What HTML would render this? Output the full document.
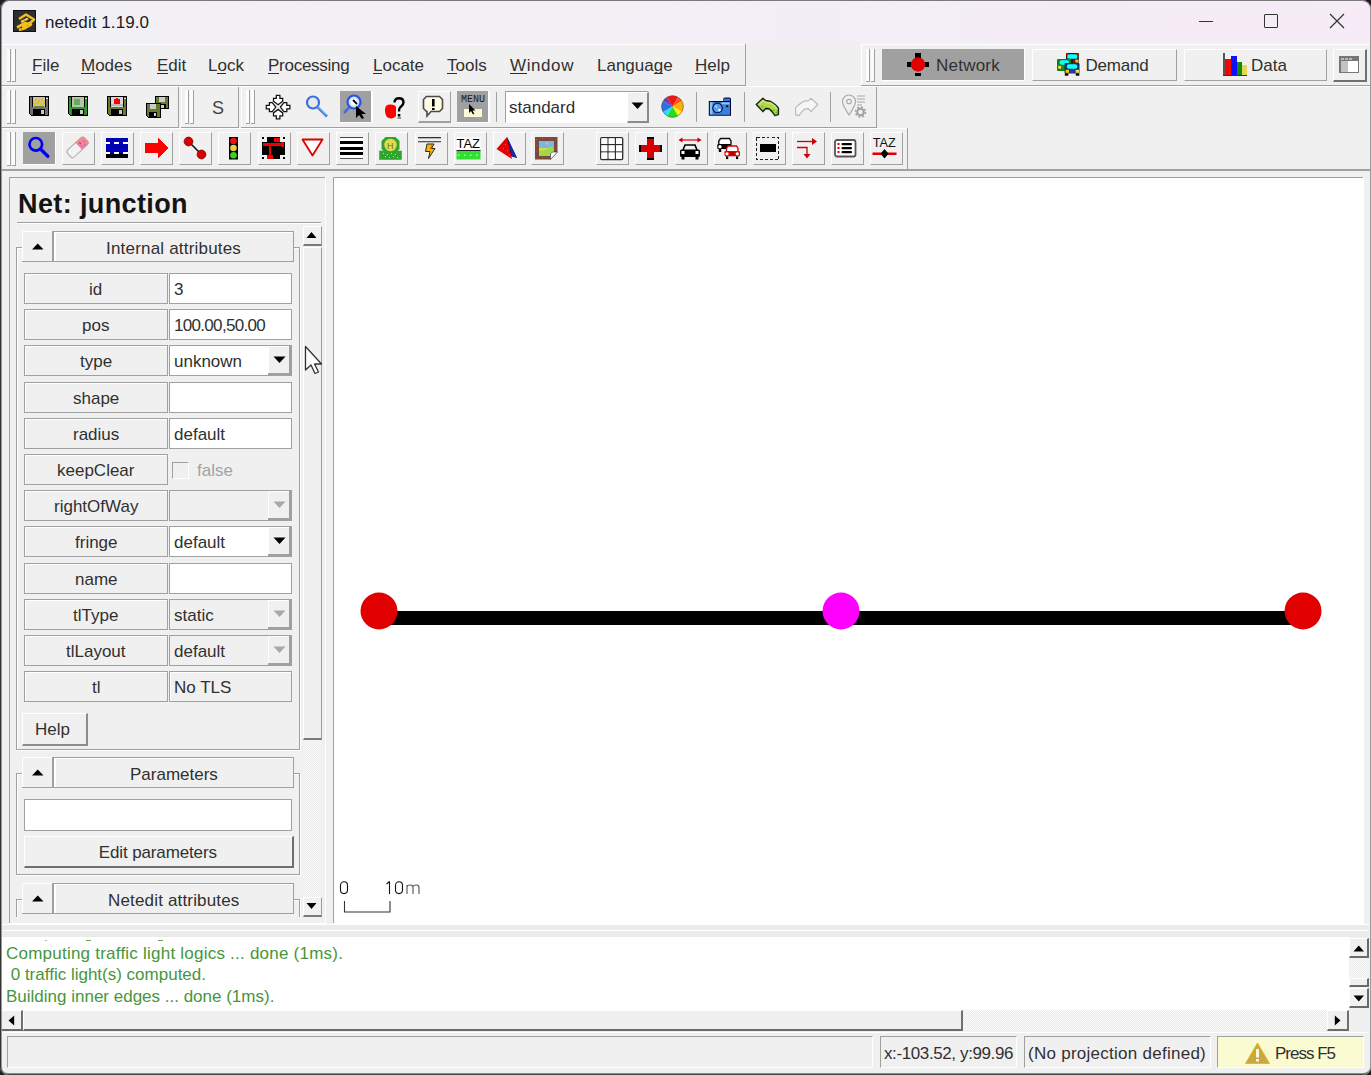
<!DOCTYPE html>
<html><head><meta charset="utf-8">
<style>
*{box-sizing:border-box;margin:0;padding:0}
body{width:1371px;height:1075px;overflow:hidden;background:#1e1e1e;font-family:"Liberation Sans",sans-serif;position:relative}
.a{position:absolute}
.t{white-space:nowrap}
</style></head><body>
<div class="a" style="left:0;top:0;width:1371px;height:1075px;background:#f0f0f0;border-radius:8px 8px 7px 7px;overflow:hidden;"><div class="a" style="left:2px;top:1px;width:1367px;height:43px;background:linear-gradient(90deg,#f1f0f4 0%,#f2eff5 45%,#f6ebf6 100%)"></div></div><div class="a" style="left:13px;top:10px;width:23px;height:22px;background:#2d2a22;"></div><div class="a t" style="left:45px;top:14.06px;font-size:17px;line-height:17px;color:#1b1b1b;letter-spacing:0.071px;">netedit 1.19.0</div><div class="a" style="left:1199px;top:21px;width:14px;height:1px;background:#333;"></div><div class="a" style="left:1264px;top:14px;width:14px;height:14px;border:1.2px solid #333;border-radius:1px"></div><svg class="a" style="left:1329px;top:13px" width="16" height="16" viewBox="0 0 16 16"><path d="M1 1L15 15M15 1L1 15" stroke="#333" stroke-width="1.2"/></svg><div class="a" style="left:2px;top:44px;width:744px;height:1px;background:#fff;"></div><div class="a" style="left:2px;top:85px;width:744px;height:1px;background:#a0a0a0;"></div><div class="a" style="left:745px;top:44px;width:1px;height:42px;background:#a0a0a0;"></div><div class="a" style="left:7px;top:49px;width:3px;height:33px;background:#fcfcfc;"></div><div class="a" style="left:10px;top:49px;width:1px;height:33px;background:#a0a0a0;"></div><div class="a" style="left:12px;top:49px;width:3px;height:33px;background:#fcfcfc;"></div><div class="a" style="left:15px;top:49px;width:1px;height:33px;background:#a0a0a0;"></div><div class="a" style="left:7px;top:81px;width:4px;height:1px;background:#a0a0a0;"></div><div class="a" style="left:12px;top:81px;width:4px;height:1px;background:#a0a0a0;"></div><div class="a t" style="left:32px;top:57.06px;font-size:17px;line-height:17px;color:#303030;">File</div><div class="a" style="left:32px;top:73px;width:10px;height:1px;background:#303030;"></div><div class="a t" style="left:81px;top:57.06px;font-size:17px;line-height:17px;color:#303030;">Modes</div><div class="a" style="left:81px;top:73px;width:14px;height:1px;background:#303030;"></div><div class="a t" style="left:157px;top:57.06px;font-size:17px;line-height:17px;color:#303030;">Edit</div><div class="a" style="left:157px;top:73px;width:11px;height:1px;background:#303030;"></div><div class="a t" style="left:208px;top:57.06px;font-size:17px;line-height:17px;color:#303030;">Lock</div><div class="a" style="left:217px;top:73px;width:9px;height:1px;background:#303030;"></div><div class="a t" style="left:268px;top:57.06px;font-size:17px;line-height:17px;color:#303030;letter-spacing:-0.259px;">Processing</div><div class="a" style="left:268px;top:73px;width:11px;height:1px;background:#303030;"></div><div class="a t" style="left:373px;top:57.06px;font-size:17px;line-height:17px;color:#303030;">Locate</div><div class="a" style="left:373px;top:73px;width:9px;height:1px;background:#303030;"></div><div class="a t" style="left:447px;top:57.06px;font-size:17px;line-height:17px;color:#303030;">Tools</div><div class="a" style="left:447px;top:73px;width:10px;height:1px;background:#303030;"></div><div class="a t" style="left:510px;top:57.06px;font-size:17px;line-height:17px;color:#303030;letter-spacing:0.589px;">Window</div><div class="a" style="left:510px;top:73px;width:17px;height:1px;background:#303030;"></div><div class="a t" style="left:597px;top:57.06px;font-size:17px;line-height:17px;color:#303030;">Language</div><div class="a" style="left:654px;top:73px;width:9px;height:1px;background:#303030;"></div><div class="a t" style="left:695px;top:57.06px;font-size:17px;line-height:17px;color:#303030;">Help</div><div class="a" style="left:695px;top:73px;width:12px;height:1px;background:#303030;"></div><div class="a" style="left:861px;top:44px;width:510px;height:1px;background:#fff;"></div><div class="a" style="left:861px;top:44px;width:1px;height:42px;background:#fff;"></div><div class="a" style="left:861px;top:85px;width:510px;height:1px;background:#a0a0a0;"></div><div class="a" style="left:866px;top:49px;width:3px;height:33px;background:#fcfcfc;"></div><div class="a" style="left:869px;top:49px;width:1px;height:33px;background:#a0a0a0;"></div><div class="a" style="left:871px;top:49px;width:3px;height:33px;background:#fcfcfc;"></div><div class="a" style="left:874px;top:49px;width:1px;height:33px;background:#a0a0a0;"></div><div class="a" style="left:866px;top:81px;width:4px;height:1px;background:#a0a0a0;"></div><div class="a" style="left:871px;top:81px;width:4px;height:1px;background:#a0a0a0;"></div><div class="a" style="left:882px;top:49px;width:143px;height:32px;background:#a0a0a0;"></div><div class="a" style="left:882px;top:80px;width:143px;height:1px;background:#fff;"></div><div class="a" style="left:1024px;top:49px;width:1px;height:32px;background:#fff;"></div><div class="a" style="left:1032px;top:49px;width:145px;height:32px;background:#f0f0f0;border-top:1px solid #fff;border-left:1px solid #fff;border-right:1px solid #a0a0a0;border-bottom:1px solid #a0a0a0;"></div><div class="a" style="left:1184px;top:49px;width:143px;height:32px;background:#f0f0f0;border-top:1px solid #fff;border-left:1px solid #fff;border-right:1px solid #a0a0a0;border-bottom:1px solid #a0a0a0;"></div><div class="a" style="left:1333px;top:49px;width:34px;height:33px;background:#f0f0f0;border-top:1px solid #fff;border-left:1px solid #fff;border-right:2px solid #707070;border-bottom:2px solid #707070"></div><div class="a t" style="left:936px;top:57.06px;font-size:17px;line-height:17px;color:#303030;letter-spacing:0.237px;">Network</div><div class="a t" style="left:1085.5px;top:57.06px;font-size:17px;line-height:17px;color:#303030;letter-spacing:-0.208px;">Demand</div><div class="a t" style="left:1251px;top:57.06px;font-size:17px;line-height:17px;color:#303030;">Data</div><div class="a" style="left:2px;top:86px;width:1369px;height:1px;background:#fff;"></div><div class="a" style="left:2px;top:127px;width:177px;height:1px;background:#a0a0a0;"></div><div class="a" style="left:181px;top:127px;width:58px;height:1px;background:#a0a0a0;"></div><div class="a" style="left:241px;top:127px;width:636px;height:1px;background:#a0a0a0;"></div><div class="a" style="left:178px;top:87px;width:1px;height:40px;background:#a0a0a0;"></div><div class="a" style="left:238px;top:87px;width:1px;height:40px;background:#a0a0a0;"></div><div class="a" style="left:876px;top:87px;width:1px;height:40px;background:#a0a0a0;"></div><div class="a" style="left:181px;top:87px;width:1px;height:40px;background:#fff;"></div><div class="a" style="left:241px;top:87px;width:1px;height:40px;background:#fff;"></div><div class="a" style="left:7px;top:90px;width:3px;height:34px;background:#fcfcfc;"></div><div class="a" style="left:10px;top:90px;width:1px;height:34px;background:#a0a0a0;"></div><div class="a" style="left:12px;top:90px;width:3px;height:34px;background:#fcfcfc;"></div><div class="a" style="left:15px;top:90px;width:1px;height:34px;background:#a0a0a0;"></div><div class="a" style="left:7px;top:123px;width:4px;height:1px;background:#a0a0a0;"></div><div class="a" style="left:12px;top:123px;width:4px;height:1px;background:#a0a0a0;"></div><div class="a" style="left:185px;top:90px;width:3px;height:34px;background:#fcfcfc;"></div><div class="a" style="left:188px;top:90px;width:1px;height:34px;background:#a0a0a0;"></div><div class="a" style="left:190px;top:90px;width:3px;height:34px;background:#fcfcfc;"></div><div class="a" style="left:193px;top:90px;width:1px;height:34px;background:#a0a0a0;"></div><div class="a" style="left:185px;top:123px;width:4px;height:1px;background:#a0a0a0;"></div><div class="a" style="left:190px;top:123px;width:4px;height:1px;background:#a0a0a0;"></div><div class="a" style="left:246px;top:90px;width:3px;height:34px;background:#fcfcfc;"></div><div class="a" style="left:249px;top:90px;width:1px;height:34px;background:#a0a0a0;"></div><div class="a" style="left:251px;top:90px;width:3px;height:34px;background:#fcfcfc;"></div><div class="a" style="left:254px;top:90px;width:1px;height:34px;background:#a0a0a0;"></div><div class="a" style="left:246px;top:123px;width:4px;height:1px;background:#a0a0a0;"></div><div class="a" style="left:251px;top:123px;width:4px;height:1px;background:#a0a0a0;"></div><div class="a t" style="left:212px;top:98.71px;font-size:18px;line-height:18px;color:#444;">S</div><div class="a" style="left:340px;top:91px;width:31px;height:31px;background:#a0a0a0;"></div><div class="a" style="left:340px;top:122px;width:33px;height:1px;background:#fff;"></div><div class="a" style="left:371px;top:91px;width:2px;height:32px;background:#fff;"></div><div class="a" style="left:418px;top:91px;width:33px;height:32px;background:#f0f0f0;border-top:1px solid #fff;border-left:1px solid #fff;border-right:1px solid #a0a0a0;border-bottom:2px solid #a0a0a0"></div><div class="a" style="left:457px;top:91px;width:31px;height:31px;background:#a0a0a0;"></div><div class="a" style="left:457px;top:122px;width:33px;height:1px;background:#fff;"></div><div class="a" style="left:488px;top:91px;width:2px;height:32px;background:#fff;"></div><div class="a" style="left:496px;top:92px;width:1px;height:30px;background:#a0a0a0;"></div><div class="a" style="left:696px;top:92px;width:1px;height:30px;background:#a0a0a0;"></div><div class="a" style="left:744px;top:92px;width:1px;height:30px;background:#a0a0a0;"></div><div class="a" style="left:830px;top:92px;width:1px;height:30px;background:#a0a0a0;"></div><div class="a" style="left:505px;top:91px;width:144px;height:32px;background:#fff;border-top:1px solid #a0a0a0;border-left:1px solid #a0a0a0;border-right:1px solid #fff;border-bottom:1px solid #fff;"></div><div class="a" style="left:627px;top:92px;width:22px;height:31px;background:#f0f0f0;border-top:1px solid #fff;border-left:1px solid #fff;border-right:2px solid #8a8a8a;border-bottom:2px solid #8a8a8a"></div><svg class="a" style="left:631px;top:102px" width="14" height="10" viewBox="0 0 14 10"><path d="M0.5 0.5H12.5L6.5 7Z" fill="#000"/></svg><div class="a t" style="left:509px;top:99.06px;font-size:17px;line-height:17px;color:#303030;">standard</div><div class="a" style="left:2px;top:128px;width:906px;height:1px;background:#fff;"></div><div class="a" style="left:2px;top:169px;width:1369px;height:2px;background:#a0a0a0;"></div><div class="a" style="left:907px;top:128px;width:1px;height:41px;background:#a0a0a0;"></div><div class="a" style="left:7px;top:132px;width:3px;height:34px;background:#fcfcfc;"></div><div class="a" style="left:10px;top:132px;width:1px;height:34px;background:#a0a0a0;"></div><div class="a" style="left:12px;top:132px;width:3px;height:34px;background:#fcfcfc;"></div><div class="a" style="left:15px;top:132px;width:1px;height:34px;background:#a0a0a0;"></div><div class="a" style="left:7px;top:165px;width:4px;height:1px;background:#a0a0a0;"></div><div class="a" style="left:12px;top:165px;width:4px;height:1px;background:#a0a0a0;"></div><div class="a" style="left:23px;top:132px;width:33px;height:33px;background:#a0a0a0;"></div><div class="a" style="left:23px;top:164px;width:33px;height:1px;background:#fff;"></div><div class="a" style="left:55px;top:132px;width:1px;height:33px;background:#fff;"></div><div class="a" style="left:62px;top:132px;width:33px;height:33px;background:#f0f0f0;border-top:1px solid #fff;border-left:1px solid #fff;border-right:1px solid #a0a0a0;border-bottom:1px solid #a0a0a0;"></div><div class="a" style="left:101px;top:132px;width:33px;height:33px;background:#f0f0f0;border-top:1px solid #fff;border-left:1px solid #fff;border-right:1px solid #a0a0a0;border-bottom:1px solid #a0a0a0;"></div><div class="a" style="left:140px;top:132px;width:33px;height:33px;background:#f0f0f0;border-top:1px solid #fff;border-left:1px solid #fff;border-right:1px solid #a0a0a0;border-bottom:1px solid #a0a0a0;"></div><div class="a" style="left:179px;top:132px;width:33px;height:33px;background:#f0f0f0;border-top:1px solid #fff;border-left:1px solid #fff;border-right:1px solid #a0a0a0;border-bottom:1px solid #a0a0a0;"></div><div class="a" style="left:218px;top:132px;width:33px;height:33px;background:#f0f0f0;border-top:1px solid #fff;border-left:1px solid #fff;border-right:1px solid #a0a0a0;border-bottom:1px solid #a0a0a0;"></div><div class="a" style="left:258px;top:132px;width:33px;height:33px;background:#f0f0f0;border-top:1px solid #fff;border-left:1px solid #fff;border-right:1px solid #a0a0a0;border-bottom:1px solid #a0a0a0;"></div><div class="a" style="left:297px;top:132px;width:33px;height:33px;background:#f0f0f0;border-top:1px solid #fff;border-left:1px solid #fff;border-right:1px solid #a0a0a0;border-bottom:1px solid #a0a0a0;"></div><div class="a" style="left:336px;top:132px;width:33px;height:33px;background:#f0f0f0;border-top:1px solid #fff;border-left:1px solid #fff;border-right:1px solid #a0a0a0;border-bottom:1px solid #a0a0a0;"></div><div class="a" style="left:375px;top:132px;width:33px;height:33px;background:#f0f0f0;border-top:1px solid #fff;border-left:1px solid #fff;border-right:1px solid #a0a0a0;border-bottom:1px solid #a0a0a0;"></div><div class="a" style="left:415px;top:132px;width:33px;height:33px;background:#f0f0f0;border-top:1px solid #fff;border-left:1px solid #fff;border-right:1px solid #a0a0a0;border-bottom:1px solid #a0a0a0;"></div><div class="a" style="left:454px;top:132px;width:33px;height:33px;background:#f0f0f0;border-top:1px solid #fff;border-left:1px solid #fff;border-right:1px solid #a0a0a0;border-bottom:1px solid #a0a0a0;"></div><div class="a" style="left:493px;top:132px;width:33px;height:33px;background:#f0f0f0;border-top:1px solid #fff;border-left:1px solid #fff;border-right:1px solid #a0a0a0;border-bottom:1px solid #a0a0a0;"></div><div class="a" style="left:531px;top:132px;width:33px;height:33px;background:#f0f0f0;border-top:1px solid #fff;border-left:1px solid #fff;border-right:1px solid #a0a0a0;border-bottom:1px solid #a0a0a0;"></div><div class="a" style="left:596px;top:132px;width:33px;height:33px;background:#f0f0f0;border-top:1px solid #fff;border-left:1px solid #fff;border-right:1px solid #a0a0a0;border-bottom:1px solid #a0a0a0;"></div><div class="a" style="left:635px;top:132px;width:33px;height:33px;background:#f0f0f0;border-top:1px solid #fff;border-left:1px solid #fff;border-right:1px solid #a0a0a0;border-bottom:1px solid #a0a0a0;"></div><div class="a" style="left:675px;top:132px;width:33px;height:33px;background:#f0f0f0;border-top:1px solid #fff;border-left:1px solid #fff;border-right:1px solid #a0a0a0;border-bottom:1px solid #a0a0a0;"></div><div class="a" style="left:714px;top:132px;width:33px;height:33px;background:#f0f0f0;border-top:1px solid #fff;border-left:1px solid #fff;border-right:1px solid #a0a0a0;border-bottom:1px solid #a0a0a0;"></div><div class="a" style="left:753px;top:132px;width:33px;height:33px;background:#f0f0f0;border-top:1px solid #fff;border-left:1px solid #fff;border-right:1px solid #a0a0a0;border-bottom:1px solid #a0a0a0;"></div><div class="a" style="left:792px;top:132px;width:33px;height:33px;background:#f0f0f0;border-top:1px solid #fff;border-left:1px solid #fff;border-right:1px solid #a0a0a0;border-bottom:1px solid #a0a0a0;"></div><div class="a" style="left:831px;top:132px;width:33px;height:33px;background:#f0f0f0;border-top:1px solid #fff;border-left:1px solid #fff;border-right:1px solid #a0a0a0;border-bottom:1px solid #a0a0a0;"></div><div class="a" style="left:870px;top:132px;width:33px;height:33px;background:#f0f0f0;border-top:1px solid #fff;border-left:1px solid #fff;border-right:1px solid #a0a0a0;border-bottom:1px solid #a0a0a0;"></div><div class="a" style="left:9px;top:177px;width:317px;height:748px;background:#f0f0f0;border-top:1px solid #a0a0a0;border-left:1px solid #a0a0a0;border-right:1px solid #fff;border-bottom:1px solid #fff;"></div><div class="a" style="left:9px;top:177px;width:317px;height:1px;background:#a0a0a0;"></div><div class="a" style="left:9px;top:177px;width:1px;height:747px;background:#a0a0a0;"></div><div class="a" style="left:9px;top:923px;width:317px;height:1px;background:#fff;"></div><div class="a" style="left:325px;top:177px;width:1px;height:747px;background:#fff;"></div><div class="a t" style="left:18px;top:190.59px;font-size:27px;line-height:27px;color:#141414;font-weight:bold;letter-spacing:0.386px;">Net: junction</div><div class="a" style="left:17px;top:222px;width:304px;height:1px;background:#a0a0a0;"></div><div class="a" style="left:17px;top:223px;width:304px;height:1px;background:#fff;"></div><div class="a" style="left:16px;top:247px;width:284px;height:1px;background:#a0a0a0;"></div><div class="a" style="left:17px;top:248px;width:282px;height:1px;background:#fff;"></div><div class="a" style="left:16px;top:247px;width:1px;height:502px;background:#a0a0a0;"></div><div class="a" style="left:17px;top:248px;width:1px;height:501px;background:#fff;"></div><div class="a" style="left:299px;top:247px;width:1px;height:502px;background:#a0a0a0;"></div><div class="a" style="left:300px;top:247px;width:1px;height:503px;background:#fff;"></div><div class="a" style="left:16px;top:749px;width:284px;height:1px;background:#a0a0a0;"></div><div class="a" style="left:16px;top:750px;width:285px;height:1px;background:#fff;"></div><div class="a" style="left:22px;top:231px;width:31px;height:31px;background:#f0f0f0;"></div><div class="a" style="left:22px;top:231px;width:31px;height:1px;background:#fff;"></div><div class="a" style="left:22px;top:231px;width:1px;height:31px;background:#fff;"></div><div class="a" style="left:22px;top:261px;width:32px;height:1px;background:#a0a0a0;"></div><div class="a" style="left:52px;top:231px;width:2px;height:31px;background:#a0a0a0;"></div><svg class="a" style="left:32px;top:243px" width="12" height="7" viewBox="0 0 12 7"><path d="M0 6.5H11.5L5.75 0.5Z" fill="#000"/></svg><div class="a" style="left:54px;top:231px;width:240px;height:31px;background:#f0f0f0;"></div><div class="a" style="left:54px;top:231px;width:240px;height:1px;background:#a0a0a0;"></div><div class="a" style="left:55px;top:232px;width:238px;height:1px;background:#fff;"></div><div class="a" style="left:54px;top:232px;width:2px;height:29px;background:#fff;"></div><div class="a" style="left:293px;top:231px;width:1px;height:31px;background:#a0a0a0;"></div><div class="a" style="left:54px;top:261px;width:240px;height:1px;background:#a0a0a0;"></div><div class="a t" style="left:106px;top:239.56px;font-size:17px;line-height:17px;color:#303030;letter-spacing:0.194px;">Internal attributes</div><div class="a" style="left:24px;top:273px;width:144px;height:31px;background:#f0f0f0;border:1px solid #a0a0a0;box-shadow:inset 1px 1px 0 #fff"></div><div class="a t" style="left:89px;top:281.06px;font-size:17px;line-height:17px;color:#303030;">id</div><div class="a" style="left:169px;top:273px;width:123px;height:31px;background:#fff;border:1px solid #a0a0a0"></div><div class="a t" style="left:174px;top:281.06px;font-size:17px;line-height:17px;color:#303030;">3</div><div class="a" style="left:24px;top:309px;width:144px;height:31px;background:#f0f0f0;border:1px solid #a0a0a0;box-shadow:inset 1px 1px 0 #fff"></div><div class="a t" style="left:82px;top:317.06px;font-size:17px;line-height:17px;color:#303030;">pos</div><div class="a" style="left:169px;top:309px;width:123px;height:31px;background:#fff;border:1px solid #a0a0a0"></div><div class="a t" style="left:174px;top:317.06px;font-size:17px;line-height:17px;color:#303030;letter-spacing:-0.686px;">100.00,50.00</div><div class="a" style="left:24px;top:345px;width:144px;height:31px;background:#f0f0f0;border:1px solid #a0a0a0;box-shadow:inset 1px 1px 0 #fff"></div><div class="a t" style="left:80px;top:353.06px;font-size:17px;line-height:17px;color:#303030;">type</div><div class="a" style="left:169px;top:345px;width:123px;height:31px;background:#fff;border:1px solid #a0a0a0"></div><div class="a" style="left:268px;top:346px;width:23px;height:29px;background:#f0f0f0;border-right:2px solid #a0a0a0;border-bottom:2px solid #a0a0a0;box-shadow:inset 1px 1px 0 #fff"></div><svg class="a" style="left:273px;top:356px" width="13" height="8" viewBox="0 0 13 8"><path d="M0.5 0.5H12.5L6.5 7Z" fill="#000"/></svg><div class="a t" style="left:174px;top:353.06px;font-size:17px;line-height:17px;color:#303030;">unknown</div><div class="a" style="left:24px;top:382px;width:144px;height:31px;background:#f0f0f0;border:1px solid #a0a0a0;box-shadow:inset 1px 1px 0 #fff"></div><div class="a t" style="left:73px;top:390.06px;font-size:17px;line-height:17px;color:#303030;">shape</div><div class="a" style="left:169px;top:382px;width:123px;height:31px;background:#fff;border:1px solid #a0a0a0"></div><div class="a" style="left:24px;top:418px;width:144px;height:31px;background:#f0f0f0;border:1px solid #a0a0a0;box-shadow:inset 1px 1px 0 #fff"></div><div class="a t" style="left:73px;top:426.06px;font-size:17px;line-height:17px;color:#303030;">radius</div><div class="a" style="left:169px;top:418px;width:123px;height:31px;background:#fff;border:1px solid #a0a0a0"></div><div class="a t" style="left:174px;top:426.06px;font-size:17px;line-height:17px;color:#303030;">default</div><div class="a" style="left:24px;top:454px;width:144px;height:31px;background:#f0f0f0;border:1px solid #a0a0a0;box-shadow:inset 1px 1px 0 #fff"></div><div class="a t" style="left:57px;top:462.06px;font-size:17px;line-height:17px;color:#303030;">keepClear</div><div class="a" style="left:172px;top:462px;width:17px;height:17px;background:#f0f0f0;border-top:1px solid #a0a0a0;border-left:1px solid #a0a0a0;border-bottom:1px solid #fff;border-right:1px solid #fff"></div><div class="a t" style="left:197px;top:462.06px;font-size:17px;line-height:17px;color:#a3a3a3;">false</div><div class="a" style="left:24px;top:490px;width:144px;height:31px;background:#f0f0f0;border:1px solid #a0a0a0;box-shadow:inset 1px 1px 0 #fff"></div><div class="a t" style="left:54px;top:498.06px;font-size:17px;line-height:17px;color:#303030;">rightOfWay</div><div class="a" style="left:169px;top:490px;width:123px;height:31px;background:#f0f0f0;border:1px solid #a0a0a0"></div><div class="a" style="left:268px;top:491px;width:23px;height:29px;background:#f0f0f0;border-right:2px solid #a0a0a0;border-bottom:2px solid #a0a0a0;box-shadow:inset 1px 1px 0 #fff"></div><svg class="a" style="left:273px;top:501px" width="13" height="8" viewBox="0 0 13 8"><path d="M0.5 0.5H12.5L6.5 7Z" fill="#a8a8a8"/></svg><div class="a" style="left:24px;top:526px;width:144px;height:31px;background:#f0f0f0;border:1px solid #a0a0a0;box-shadow:inset 1px 1px 0 #fff"></div><div class="a t" style="left:75px;top:534.06px;font-size:17px;line-height:17px;color:#303030;">fringe</div><div class="a" style="left:169px;top:526px;width:123px;height:31px;background:#fff;border:1px solid #a0a0a0"></div><div class="a" style="left:268px;top:527px;width:23px;height:29px;background:#f0f0f0;border-right:2px solid #a0a0a0;border-bottom:2px solid #a0a0a0;box-shadow:inset 1px 1px 0 #fff"></div><svg class="a" style="left:273px;top:537px" width="13" height="8" viewBox="0 0 13 8"><path d="M0.5 0.5H12.5L6.5 7Z" fill="#000"/></svg><div class="a t" style="left:174px;top:534.06px;font-size:17px;line-height:17px;color:#303030;">default</div><div class="a" style="left:24px;top:563px;width:144px;height:31px;background:#f0f0f0;border:1px solid #a0a0a0;box-shadow:inset 1px 1px 0 #fff"></div><div class="a t" style="left:75px;top:571.06px;font-size:17px;line-height:17px;color:#303030;">name</div><div class="a" style="left:169px;top:563px;width:123px;height:31px;background:#fff;border:1px solid #a0a0a0"></div><div class="a" style="left:24px;top:599px;width:144px;height:31px;background:#f0f0f0;border:1px solid #a0a0a0;box-shadow:inset 1px 1px 0 #fff"></div><div class="a t" style="left:73px;top:607.06px;font-size:17px;line-height:17px;color:#303030;">tlType</div><div class="a" style="left:169px;top:599px;width:123px;height:31px;background:#f0f0f0;border:1px solid #a0a0a0"></div><div class="a" style="left:268px;top:600px;width:23px;height:29px;background:#f0f0f0;border-right:2px solid #a0a0a0;border-bottom:2px solid #a0a0a0;box-shadow:inset 1px 1px 0 #fff"></div><svg class="a" style="left:273px;top:610px" width="13" height="8" viewBox="0 0 13 8"><path d="M0.5 0.5H12.5L6.5 7Z" fill="#a8a8a8"/></svg><div class="a t" style="left:174px;top:607.06px;font-size:17px;line-height:17px;color:#303030;">static</div><div class="a" style="left:24px;top:635px;width:144px;height:31px;background:#f0f0f0;border:1px solid #a0a0a0;box-shadow:inset 1px 1px 0 #fff"></div><div class="a t" style="left:66px;top:643.06px;font-size:17px;line-height:17px;color:#303030;">tlLayout</div><div class="a" style="left:169px;top:635px;width:123px;height:31px;background:#f0f0f0;border:1px solid #a0a0a0"></div><div class="a" style="left:268px;top:636px;width:23px;height:29px;background:#f0f0f0;border-right:2px solid #a0a0a0;border-bottom:2px solid #a0a0a0;box-shadow:inset 1px 1px 0 #fff"></div><svg class="a" style="left:273px;top:646px" width="13" height="8" viewBox="0 0 13 8"><path d="M0.5 0.5H12.5L6.5 7Z" fill="#a8a8a8"/></svg><div class="a t" style="left:174px;top:643.06px;font-size:17px;line-height:17px;color:#303030;">default</div><div class="a" style="left:24px;top:671px;width:144px;height:31px;background:#f0f0f0;border:1px solid #a0a0a0;box-shadow:inset 1px 1px 0 #fff"></div><div class="a t" style="left:92px;top:679.06px;font-size:17px;line-height:17px;color:#303030;">tl</div><div class="a" style="left:169px;top:671px;width:123px;height:31px;background:#f0f0f0;border:1px solid #a0a0a0;box-shadow:inset 1px 1px 0 #fff"></div><div class="a t" style="left:174px;top:679.06px;font-size:17px;line-height:17px;color:#303030;">No TLS</div><div class="a" style="left:22px;top:713px;width:66px;height:33px;background:#f0f0f0;border-top:1px solid #fff;border-left:1px solid #fff;border-right:2px solid #8c8c8c;border-bottom:2px solid #8c8c8c"></div><div class="a t" style="left:35px;top:721.06px;font-size:17px;line-height:17px;color:#303030;">Help</div><div class="a" style="left:16px;top:773px;width:284px;height:1px;background:#a0a0a0;"></div><div class="a" style="left:17px;top:774px;width:282px;height:1px;background:#fff;"></div><div class="a" style="left:16px;top:773px;width:1px;height:101px;background:#a0a0a0;"></div><div class="a" style="left:17px;top:774px;width:1px;height:100px;background:#fff;"></div><div class="a" style="left:299px;top:773px;width:1px;height:101px;background:#a0a0a0;"></div><div class="a" style="left:300px;top:773px;width:1px;height:102px;background:#fff;"></div><div class="a" style="left:16px;top:874px;width:284px;height:1px;background:#a0a0a0;"></div><div class="a" style="left:16px;top:875px;width:285px;height:1px;background:#fff;"></div><div class="a" style="left:22px;top:757px;width:31px;height:31px;background:#f0f0f0;"></div><div class="a" style="left:22px;top:757px;width:31px;height:1px;background:#fff;"></div><div class="a" style="left:22px;top:757px;width:1px;height:31px;background:#fff;"></div><div class="a" style="left:22px;top:787px;width:32px;height:1px;background:#a0a0a0;"></div><div class="a" style="left:52px;top:757px;width:2px;height:31px;background:#a0a0a0;"></div><svg class="a" style="left:32px;top:769px" width="12" height="7" viewBox="0 0 12 7"><path d="M0 6.5H11.5L5.75 0.5Z" fill="#000"/></svg><div class="a" style="left:54px;top:757px;width:240px;height:31px;background:#f0f0f0;"></div><div class="a" style="left:54px;top:757px;width:240px;height:1px;background:#a0a0a0;"></div><div class="a" style="left:55px;top:758px;width:238px;height:1px;background:#fff;"></div><div class="a" style="left:54px;top:758px;width:2px;height:29px;background:#fff;"></div><div class="a" style="left:293px;top:757px;width:1px;height:31px;background:#a0a0a0;"></div><div class="a" style="left:54px;top:787px;width:240px;height:1px;background:#a0a0a0;"></div><div class="a t" style="left:130px;top:765.56px;font-size:17px;line-height:17px;color:#303030;">Parameters</div><div class="a" style="left:24px;top:799px;width:268px;height:32px;background:#fff;border:1px solid #a0a0a0"></div><div class="a" style="left:24px;top:836px;width:270px;height:32px;background:#f0f0f0;border-top:1px solid #fff;border-left:1px solid #fff;border-right:2px solid #6e6e6e;border-bottom:2px solid #6e6e6e"></div><div class="a t" style="left:98.8px;top:844.06px;font-size:17px;line-height:17px;color:#303030;letter-spacing:-0.131px;">Edit parameters</div><div class="a" style="left:16px;top:899px;width:284px;height:1px;background:#a0a0a0;"></div><div class="a" style="left:17px;top:900px;width:282px;height:1px;background:#fff;"></div><div class="a" style="left:16px;top:899px;width:1px;height:18px;background:#a0a0a0;"></div><div class="a" style="left:17px;top:900px;width:1px;height:17px;background:#fff;"></div><div class="a" style="left:299px;top:899px;width:1px;height:18px;background:#a0a0a0;"></div><div class="a" style="left:300px;top:899px;width:1px;height:19px;background:#fff;"></div><div class="a" style="left:22px;top:883px;width:31px;height:31px;background:#f0f0f0;"></div><div class="a" style="left:22px;top:883px;width:31px;height:1px;background:#fff;"></div><div class="a" style="left:22px;top:883px;width:1px;height:31px;background:#fff;"></div><div class="a" style="left:22px;top:913px;width:32px;height:1px;background:#a0a0a0;"></div><div class="a" style="left:52px;top:883px;width:2px;height:31px;background:#a0a0a0;"></div><svg class="a" style="left:32px;top:895px" width="12" height="7" viewBox="0 0 12 7"><path d="M0 6.5H11.5L5.75 0.5Z" fill="#000"/></svg><div class="a" style="left:54px;top:883px;width:240px;height:31px;background:#f0f0f0;"></div><div class="a" style="left:54px;top:883px;width:240px;height:1px;background:#a0a0a0;"></div><div class="a" style="left:55px;top:884px;width:238px;height:1px;background:#fff;"></div><div class="a" style="left:54px;top:884px;width:2px;height:29px;background:#fff;"></div><div class="a" style="left:293px;top:883px;width:1px;height:31px;background:#a0a0a0;"></div><div class="a" style="left:54px;top:913px;width:240px;height:1px;background:#a0a0a0;"></div><div class="a t" style="left:108px;top:891.56px;font-size:17px;line-height:17px;color:#303030;letter-spacing:0.168px;">Netedit attributes</div><div class="a" style="left:10px;top:917px;width:315px;height:6px;background:#f0f0f0;"></div><div class="a" style="left:301px;top:226px;width:22px;height:691px;background:#f0f0f0;"></div><div class="a" style="left:303px;top:740px;width:19px;height:157px;background-image:repeating-conic-gradient(#ebebeb 0 25%,#fafafa 0 50%);background-size:2px 2px"></div><div class="a" style="left:303px;top:226px;width:19px;height:20px;background:#f0f0f0;border-top:1px solid #fff;border-left:1px solid #fff;border-right:1px solid #9a9a9a;border-bottom:2px solid #7a7a7a"></div><svg class="a" style="left:0px;top:0px" width="1371" height="1075" viewBox="0 0 1371 1075"><path d="M306.5 238.0H316.5L311.5 232.0Z" fill="#000"/></svg><div class="a" style="left:303px;top:247px;width:19px;height:493px;background:#f0f0f0;border-top:1px solid #fff;border-left:1px solid #fff;border-right:1px solid #9a9a9a;border-bottom:2px solid #7a7a7a"></div><div class="a" style="left:303px;top:897px;width:19px;height:20px;background:#f0f0f0;border-top:1px solid #fff;border-left:1px solid #fff;border-right:1px solid #9a9a9a;border-bottom:2px solid #7a7a7a"></div><svg class="a" style="left:0px;top:0px" width="1371" height="1075" viewBox="0 0 1371 1075"><path d="M306.5 903.0H316.5L311.5 909.0Z" fill="#000"/></svg><div class="a" style="left:333px;top:177px;width:1030px;height:746px;background:#fff;"></div><div class="a" style="left:333px;top:177px;width:1030px;height:1px;background:#a0a0a0;"></div><div class="a" style="left:333px;top:177px;width:1px;height:746px;background:#a0a0a0;"></div><div class="a" style="left:333px;top:923px;width:1031px;height:1px;background:#fff;"></div><div class="a" style="left:1363px;top:177px;width:1px;height:747px;background:#fff;"></div><div class="a" style="left:378px;top:611px;width:925px;height:14px;background:#000;"></div><svg class="a" style="left:355px;top:585px" width="1000" height="55" viewBox="0 0 1000 55">
<circle cx="24" cy="26" r="18.5" fill="#e00000"/>
<circle cx="486" cy="26" r="18.5" fill="#ff00ff"/>
<circle cx="948" cy="26" r="18.5" fill="#e00000"/>
</svg><svg class="a" style="left:336px;top:878px" width="90" height="38" viewBox="0 0 90 38"><g fill="none" stroke="#111" stroke-width="1.1"><rect x="4.5" y="3.8" width="7" height="11.8" rx="3.5"/><path d="M53.5 3.5V16M53.5 3.5L50.5 6"/><rect x="59.5" y="3.8" width="7" height="11.8" rx="3.5"/><path d="M71 16V7M71 9Q71 7 74.5 7Q77 7 77 9.5V16M77 9Q77 7 80.5 7Q83 7 83 9.5V16" stroke="#555"/><path d="M8.5 23V34H54V23" stroke="#333"/></g></svg><div class="a" style="left:2px;top:924px;width:1367px;height:1px;background:#fff;"></div><div class="a" style="left:2px;top:925px;width:1367px;height:6px;background:#ebebeb;"></div><div class="a" style="left:2px;top:930px;width:1367px;height:1px;background:#fff;"></div><div class="a" style="left:2px;top:931px;width:1367px;height:6px;background:#ebebeb;"></div><div class="a" style="left:2px;top:937px;width:1347px;height:73px;background:#fff;"></div><div class="a t" style="left:6px;top:944.66px;font-size:17px;line-height:17px;color:#46963c;letter-spacing:0.228px;">Computing traffic light logics ... done (1ms).</div><div class="a t" style="left:6px;top:966.41px;font-size:17px;line-height:17px;color:#46963c;">&nbsp;0 traffic light(s) computed.</div><div class="a t" style="left:6px;top:988.16px;font-size:17px;line-height:17px;color:#46963c;">Building inner edges ... done (1ms).</div><div class="a" style="left:1349px;top:937px;width:20px;height:74px;background:#f0f0f0;"></div><div class="a" style="left:1349px;top:958px;width:20px;height:30px;background-image:repeating-conic-gradient(#ebebeb 0 25%,#fafafa 0 50%);background-size:2px 2px"></div><div class="a" style="left:1349px;top:938px;width:20px;height:20px;background:#f0f0f0;border-top:1px solid #fff;border-left:1px solid #fff;border-right:2px solid #6a6a6a;border-bottom:2px solid #6a6a6a"></div><svg class="a" style="left:1353px;top:945px" width="12" height="7" viewBox="0 0 12 7"><path d="M0.5 6.5H11L5.75 0.5Z" fill="#000"/></svg><div class="a" style="left:1349px;top:978px;width:20px;height:9px;background:#f0f0f0;border-top:1px solid #fff;border-left:1px solid #fff;border-right:2px solid #6a6a6a;border-bottom:2px solid #6a6a6a"></div><div class="a" style="left:1349px;top:988px;width:20px;height:20px;background:#f0f0f0;border-top:1px solid #fff;border-left:1px solid #fff;border-right:2px solid #6a6a6a;border-bottom:2px solid #6a6a6a"></div><svg class="a" style="left:1353px;top:995px" width="12" height="7" viewBox="0 0 12 7"><path d="M0.5 0.5H11L5.75 6.5Z" fill="#000"/></svg><div class="a" style="left:2px;top:1010px;width:1347px;height:21px;background-image:repeating-conic-gradient(#ebebeb 0 25%,#fafafa 0 50%);background-size:2px 2px"></div><div class="a" style="left:1px;top:1010px;width:22px;height:21px;background:#f0f0f0;border-top:1px solid #fff;border-left:1px solid #fff;border-right:2px solid #707070;border-bottom:2px solid #6a6a6a"></div><svg class="a" style="left:8px;top:1015px" width="7" height="11" viewBox="0 0 7 11"><path d="M6.2 0.5V10.5L0.5 5.5Z" fill="#000"/></svg><div class="a" style="left:23px;top:1010px;width:940px;height:21px;background:#f0f0f0;border-top:1px solid #fff;border-left:1px solid #fff;border-right:2px solid #707070;border-bottom:2px solid #6a6a6a"></div><div class="a" style="left:1327px;top:1010px;width:22px;height:21px;background:#f0f0f0;border-top:1px solid #fff;border-left:1px solid #fff;border-right:2px solid #707070;border-bottom:2px solid #6a6a6a"></div><svg class="a" style="left:1334px;top:1015px" width="7" height="11" viewBox="0 0 7 11"><path d="M0.8 0.5V10.5L6.5 5.5Z" fill="#000"/></svg><div class="a" style="left:1349px;top:1010px;width:20px;height:21px;background:#f0f0f0;"></div><div class="a" style="left:2px;top:1032px;width:1367px;height:1px;background:#fff;"></div><div class="a" style="left:7px;top:1036px;width:866px;height:32px;background:#f0f0f0;border-top:1px solid #a0a0a0;border-left:1px solid #a0a0a0;border-right:1px solid #fff;border-bottom:1px solid #fff;"></div><div class="a" style="left:880px;top:1036px;width:137px;height:32px;background:#f0f0f0;border-top:1px solid #a0a0a0;border-left:1px solid #a0a0a0;border-right:1px solid #fff;border-bottom:1px solid #fff;"></div><div class="a" style="left:1024px;top:1036px;width:187px;height:32px;background:#f0f0f0;border-top:1px solid #a0a0a0;border-left:1px solid #a0a0a0;border-right:1px solid #fff;border-bottom:1px solid #fff;"></div><div class="a" style="left:1217px;top:1036px;width:147px;height:32px;background:#fbfbd2;border-top:1px solid #a0a0a0;border-left:1px solid #a0a0a0;border-right:1px solid #fff;border-bottom:1px solid #fff;"></div><div class="a t" style="left:884px;top:1045.06px;font-size:17px;line-height:17px;color:#303030;letter-spacing:-0.391px;">x:-103.52, y:99.96</div><div class="a t" style="left:1028px;top:1045.06px;font-size:17px;line-height:17px;color:#303030;letter-spacing:0.263px;">(No projection defined)</div><div class="a t" style="left:1275px;top:1045.06px;font-size:17px;line-height:17px;color:#303030;letter-spacing:-1.002px;">Press F5</div><div class="a" style="left:45px;top:940px;width:2px;height:1px;background:#9ab890;"></div><div class="a" style="left:86px;top:940px;width:5px;height:1px;background:#6a9a5a;"></div><div class="a" style="left:158px;top:940px;width:5px;height:1px;background:#6a9a5a;"></div><svg class="a" style="left:29px;top:96px" width="20" height="20" viewBox="0 0 20 20" shape-rendering="crispEdges">
<path d="M0 0H20V20H2L0 18Z" fill="#000"/>
<path d="M1 1H19V19H2.5L1 17.5Z" fill="#707070"/>
<rect x="3" y="0" width="14" height="11" fill="#000"/>
<rect x="4" y="1" width="12" height="10" fill="#c9c3a0"/>
<rect x="17" y="2" width="2" height="1" fill="#ddd"/>
<rect x="4" y="13" width="12" height="7" fill="#000"/>
<rect x="12" y="14" width="3" height="4" fill="#c8c8c8"/>
<g fill="#f5b800"><rect x="6" y="3" width="2" height="2"/><rect x="9" y="4" width="2" height="2"/><rect x="12" y="3" width="2" height="2"/><rect x="5" y="7" width="2" height="2"/><rect x="8" y="6" width="2" height="2"/><rect x="11" y="7" width="2" height="2"/><rect x="14" y="6" width="2" height="2"/></g><rect x="5" y="10" width="10" height="1" fill="#5a8a3a"/></svg><svg class="a" style="left:68px;top:96px" width="20" height="20" viewBox="0 0 20 20" shape-rendering="crispEdges">
<path d="M0 0H20V20H2L0 18Z" fill="#000"/>
<path d="M1 1H19V19H2.5L1 17.5Z" fill="#3d7a2a"/>
<rect x="3" y="0" width="14" height="11" fill="#000"/>
<rect x="4" y="1" width="12" height="10" fill="#b7c4a8"/>
<rect x="17" y="2" width="2" height="1" fill="#ddd"/>
<rect x="4" y="13" width="12" height="7" fill="#000"/>
<rect x="12" y="14" width="3" height="4" fill="#c8c8c8"/>
<g fill="#2e9a2e"><rect x="1" y="2" width="2" height="16" /><rect x="17" y="3" width="2" height="15"/><rect x="3" y="11" width="14" height="2"/><rect x="6" y="3" width="6" height="6" opacity=".6"/></g></svg><svg class="a" style="left:107px;top:96px" width="20" height="20" viewBox="0 0 20 20" shape-rendering="crispEdges">
<path d="M0 0H20V20H2L0 18Z" fill="#000"/>
<path d="M1 1H19V19H2.5L1 17.5Z" fill="#667a30"/>
<rect x="3" y="0" width="14" height="11" fill="#000"/>
<rect x="4" y="1" width="12" height="10" fill="#d8d8d8"/>
<rect x="17" y="2" width="2" height="1" fill="#ddd"/>
<rect x="4" y="13" width="12" height="7" fill="#000"/>
<rect x="12" y="14" width="3" height="4" fill="#c8c8c8"/>
<circle cx="10" cy="5.5" r="3.2" fill="#f00"/><rect x="4" y="8" width="12" height="1.5" fill="#bbb"/></svg><svg class="a" style="left:155px;top:96px" width="14" height="13" viewBox="0 0 14 13" shape-rendering="crispEdges"><rect width="14" height="13" fill="#000"/><rect x="1" y="1" width="12" height="11" fill="#667a30"/><rect x="4" y="1" width="6" height="5" fill="#ccc"/><rect x="4" y="8" width="7" height="5" fill="#000"/><rect x="6" y="9" width="3" height="3" fill="#ccc"/></svg><svg class="a" style="left:146px;top:103px" width="15" height="15" viewBox="0 0 15 15" shape-rendering="crispEdges"><path d="M0 0H15V15H2L0 13Z" fill="#000"/><path d="M1 1H14V14H2L1 13Z" fill="#667a30"/><rect x="4" y="1" width="6" height="5" fill="#ccc"/><rect x="3" y="9" width="8" height="6" fill="#000"/><rect x="8" y="10" width="2" height="3" fill="#ccc"/></svg><svg class="a" style="left:264px;top:93px" width="28" height="28" viewBox="0 0 28 28"><g fill="#fff" stroke="#111" stroke-width="1.25" stroke-linejoin="miter">
<path d="M12.3 2.3H15.9V5.4H18.7V8.3L14.1 11.8L9.5 8.3V5.4H12.3Z"/><path d="M12.3 2.3H15.9V5.4H18.7V8.3L14.1 11.8L9.5 8.3V5.4H12.3Z" transform="rotate(90 14.1 14.1)"/><path d="M12.3 2.3H15.9V5.4H18.7V8.3L14.1 11.8L9.5 8.3V5.4H12.3Z" transform="rotate(180 14.1 14.1)"/><path d="M12.3 2.3H15.9V5.4H18.7V8.3L14.1 11.8L9.5 8.3V5.4H12.3Z" transform="rotate(270 14.1 14.1)"/>
</g></svg><svg class="a" style="left:305px;top:95px" width="24" height="24" viewBox="0 0 24 24"><circle cx="8" cy="7.5" r="6" fill="#e8e8e8" stroke="#3a6fe0" stroke-width="2.2"/><path d="M12.5 12L22 21.5" stroke="#4a7fe0" stroke-width="2.6"/><path d="M13 11.5L21.5 20" stroke="#8fd8e8" stroke-width="1"/></svg><svg class="a" style="left:342px;top:92px" width="26" height="28" viewBox="0 0 26 28"><circle cx="12" cy="10" r="6.5" fill="#cfe6ff" stroke="#3050e0" stroke-width="2.2"/><path d="M7.5 15L2 21" stroke="#4070e0" stroke-width="2.6"/><circle cx="12" cy="10" r="3.3" fill="#fff"/><path d="M11 8L15 12" stroke="#000" stroke-width="1.8"/><path d="M14 14V26L17 23L20 27L22 26L19.5 22H24Z" fill="#000"/></svg><svg class="a" style="left:383px;top:97px" width="24" height="23" viewBox="0 0 24 23"><path d="M3 9C6 7 11 7 13 10L13 19C11 22 6 22 4 20C1.5 17 1.5 11 3 9Z" fill="#f00"/><path d="M11.5 5.5C11.5 2.5 13.5 1.3 16 1.3C19 1.3 20.5 3 20.5 5.5C20.5 8 18.5 9 17 10.5C16 11.5 16 13 16 14.5" fill="none" stroke="#000" stroke-width="2.4"/><rect x="14.8" y="17" width="2.5" height="2.5" fill="#000"/><rect x="14.5" y="20.5" width="3.5" height="1" fill="#333"/></svg><svg class="a" style="left:422px;top:95px" width="23" height="23" viewBox="0 0 23 23"><path d="M4.5 1.5H17.5L20.5 4.5V13.5L17.5 16.5H9L5 21V16.5H4.5L1.5 13.5V4.5Z" fill="#fdfde2" stroke="#4a4a4a" stroke-width="1.6"/><rect x="10" y="4" width="2.6" height="7.5" fill="#000"/><rect x="10" y="13" width="2.6" height="2" fill="#000"/></svg><svg class="a" style="left:459px;top:93px" width="28" height="26" viewBox="0 0 28 26"><text x="2" y="8.8" font-family="Liberation Mono" font-size="10" fill="#1a1a1a" textLength="24" lengthAdjust="spacingAndGlyphs">MENU</text><rect x="5" y="16" width="18" height="8" fill="#fbfbd8"/><path d="M10 11V20L12 18L14 21.5L15.3 20.8L13.5 17.5H16.5Z" fill="#000"/></svg><svg class="a" style="left:661px;top:95px" width="23" height="23" viewBox="0 0 23 23"><path d="M11.5 11.5L6.00 1.97A11 11 0 0 1 17.00 1.97Z" fill="#ff1010"/><path d="M11.5 11.5L17.00 1.97A11 11 0 0 1 21.03 6.00Z" fill="#ff5a20"/><path d="M11.5 11.5L21.03 6.00A11 11 0 0 1 21.03 17.00Z" fill="#ffb000"/><path d="M11.5 11.5L21.03 17.00A11 11 0 0 1 17.00 21.03Z" fill="#ffee20"/><path d="M11.5 11.5L17.00 21.03A11 11 0 0 1 6.00 21.03Z" fill="#20e020"/><path d="M11.5 11.5L6.00 21.03A11 11 0 0 1 1.97 17.00Z" fill="#20e0ff"/><path d="M11.5 11.5L1.97 17.00A11 11 0 0 1 1.97 6.00Z" fill="#3070e0"/><path d="M11.5 11.5L1.97 6.00A11 11 0 0 1 6.00 1.97Z" fill="#7040b0"/><circle cx="11.5" cy="11.5" r="10.8" fill="none" stroke="#444" stroke-width=".8" opacity=".6"/></svg><svg class="a" style="left:704px;top:92px" width="32" height="28" viewBox="0 0 32 28"><path d="M4.8 9H19.3V6.5Q19.5 5.5 21 5.5H25.5Q27 5.5 27 7V23.8H4.8Z" fill="#000a30"/><rect x="5.8" y="10" width="20.2" height="12.8" fill="#3a80e0"/><rect x="6" y="10.2" width="2.5" height="12" fill="#8ac0f0"/><rect x="17.5" y="10.5" width="8" height="1.8" fill="#90c8f0"/><rect x="20" y="6.5" width="6" height="2.5" fill="#3a70d0"/><rect x="10" y="9" width="7" height="1.2" fill="#000"/><circle cx="13.5" cy="16" r="5.3" fill="#001050"/><circle cx="13.5" cy="16" r="4.2" fill="#5a9ae8"/><path d="M11 13.5L13 15.5M14 17L16 19" stroke="#a8e8f0" stroke-width="1.3"/><circle cx="15.8" cy="18.2" r="1.1" fill="#fff"/><rect x="22" y="13.5" width="2.2" height="1.6" fill="#000"/></svg><svg class="a" style="left:752px;top:94px" width="30" height="26" viewBox="0 0 30 26"><path d="M4.3 10.5L10.9 4.3L13.5 6.6L17.8 7.2L21 9L23.8 11.2L26.4 14V20.6L23 21.6L20 17.6L17.4 15L13.6 14.6L11 17.6Z" fill="#b4d44a" stroke="#1e2a10" stroke-width="1.5" stroke-linejoin="round"/><path d="M7 10.5L11 6.5L14 8.5L19 9L23 12L25 15" fill="none" stroke="#d8f0a0" stroke-width="1.6" opacity=".7"/><g fill="#30d030"><circle cx="10.5" cy="12.5" r="1"/><circle cx="21.5" cy="16.5" r="1"/><circle cx="24.5" cy="18.5" r="1"/></g><path d="M13.5 14.5H16.5" stroke="#000" stroke-width="1.2"/></svg><svg class="a" style="left:792px;top:94px" width="30" height="26" viewBox="0 0 30 26"><path transform="translate(30 0) scale(-1 1)" d="M4.3 10.5L10.9 4.3L13.5 6.6L17.8 7.2L21 9L23.8 11.2L26.4 14V20.6L23 21.6L20 17.6L17.4 15L13.6 14.6L11 17.6Z" fill="#f6f6f6" stroke="#b8b8b8" stroke-width="1.1" stroke-linejoin="round"/></svg><svg class="a" style="left:841px;top:94px" width="26" height="24" viewBox="0 0 26 24"><path d="M8 21C4 15 1.5 11 1.5 7.5C1.5 3.8 4.5 1 8 1C11.5 1 14.5 3.8 14.5 7.5C14.5 11 12 15 8 21Z" fill="none" stroke="#a8a8a8" stroke-width="1.2"/><circle cx="8" cy="7.5" r="2.3" fill="none" stroke="#a8a8a8" stroke-width="1.1"/><g stroke="#a8a8a8" stroke-width="1.1"><path d="M16 2H24M16 5H24M16 8H24M16 11H21"/></g><circle cx="19.5" cy="18" r="3.3" fill="none" stroke="#a0a0a0" stroke-width="2"/><circle cx="19.5" cy="18" r="5" fill="none" stroke="#a0a0a0" stroke-width="1.5" stroke-dasharray="2 1.9"/></svg><svg class="a" style="left:25px;top:134px" width="28" height="28" viewBox="0 0 28 28"><circle cx="10.8" cy="10.3" r="6.3" fill="none" stroke="#0000ff" stroke-width="2.7"/><path d="M15.5 15L22.8 22.3" stroke="#0000ff" stroke-width="3.4" stroke-linecap="round"/></svg><svg class="a" style="left:63px;top:133px" width="30" height="30" viewBox="0 0 30 30"><g transform="translate(14.6 14.3) rotate(-43)"><rect x="-11.5" y="-4.8" width="23" height="9.6" rx="2.8" fill="#f2f2f2" stroke="#a8a8a8" stroke-width="1"/><path d="M1.5 -4.8H9Q11.8 -4.8 11.8 -2V2Q11.8 4.8 9 4.8H1.5Z" fill="#f28a8a"/><g fill="#9a60d0"><circle cx="4" cy="2" r=".7"/><circle cx="7" cy="3" r=".7"/><circle cx="9" cy="0" r=".7"/><circle cx="5" cy="-2" r=".7"/></g><circle cx="4.5" cy="-1" r=".9" fill="#ff00ff"/></g></svg><svg class="a" style="left:106px;top:138px" width="22" height="20" viewBox="0 0 22 20" shape-rendering="crispEdges"><rect width="22" height="15" fill="#0000b4"/><rect y="15" width="22" height="5" fill="#000"/><g fill="#fff"><rect x="0" y="4" width="4" height="2"/><rect x="8" y="4" width="5" height="2"/><rect x="17" y="4" width="5" height="2"/><rect x="0" y="14" width="4" height="2"/><rect x="8" y="14" width="5" height="2"/><rect x="17" y="14" width="5" height="2"/></g></svg><svg class="a" style="left:145px;top:138px" width="23" height="20" viewBox="0 0 23 20" shape-rendering="crispEdges"><path d="M0 5H13V0L23 10L13 20V15H0Z" fill="#ff0000"/></svg><svg class="a" style="left:181px;top:134px" width="28" height="28" viewBox="0 0 28 28"><path d="M7.5 7.5L20.5 20.5" stroke="#111" stroke-width="1.6"/><circle cx="7.5" cy="7.5" r="4.4" fill="#d80000" stroke="#800" stroke-width=".8"/><circle cx="20.5" cy="20.5" r="4.4" fill="#d80000" stroke="#800" stroke-width=".8"/></svg><svg class="a" style="left:229px;top:137px" width="10" height="23" viewBox="0 0 10 23"><rect width="9" height="22.5" fill="#000"/><circle cx="4.5" cy="4" r="3.3" fill="#f01010"/><circle cx="4.5" cy="11" r="3.3" fill="#e8d040"/><circle cx="4.5" cy="18.3" r="3.3" fill="#40d020"/></svg><svg class="a" style="left:258px;top:134px" width="30" height="29" viewBox="0 0 30 29" shape-rendering="crispEdges"><g fill="#000"><rect x="4" y="3" width="2" height="2"/><rect x="24.5" y="3" width="2" height="2"/><rect x="4" y="23" width="2" height="2"/><rect x="24.5" y="23" width="2" height="2"/><path d="M8.5 3H22V7.5H26.5V21H22V25H8.5V21H4V7.5H8.5Z"/></g><g fill="#f00000"><rect x="5" y="9" width="21" height="3.4"/><rect x="11" y="11" width="2.2" height="13"/><rect x="16" y="3.5" width="5.5" height="4"/><rect x="23.3" y="7.5" width="3" height="5.5"/><rect x="9" y="21" width="6" height="4"/></g></svg><svg class="a" style="left:301px;top:138px" width="23" height="19" viewBox="0 0 23 19"><path d="M1.5 1.5H21.5L11.5 17.5Z" fill="#fff" stroke="#e00000" stroke-width="1.8" stroke-linejoin="round"/></svg><svg class="a" style="left:340px;top:137px" width="23" height="23" viewBox="0 0 23 23" shape-rendering="crispEdges"><rect y="0" width="23" height="1" fill="#444"/><rect y="4" width="23" height="3" fill="#000"/><rect y="10" width="23" height="3" fill="#000"/><rect y="15" width="23" height="3" fill="#000"/><rect y="21" width="23" height="1" fill="#555"/><rect y="1" width="23" height="3" fill="#fff"/><rect y="7" width="23" height="3" fill="#fff"/><rect y="13" width="23" height="2" fill="#fff"/><rect y="18" width="23" height="3" fill="#fff"/></svg><svg class="a" style="left:379px;top:136px" width="23" height="24" viewBox="0 0 23 24"><rect x="0.5" y="15" width="22" height="8.5" fill="#2ea52e" stroke="#6a8a3a" stroke-width=".6"/><path d="M6.5 1H16.5L20.5 5V13L16.5 17H6.5L2.5 13V5Z" fill="#2ea52e"/><circle cx="11.5" cy="9" r="6.2" fill="#e8d84a"/><text x="8" y="12.5" font-family="Liberation Sans" font-size="9" fill="#6a7a30">H</text><g fill="#c8e08a"><rect x="4" y="17" width="1" height="1"/><rect x="8" y="18" width="1" height="1"/><rect x="12" y="17" width="1" height="1"/><rect x="16" y="18" width="1" height="1"/><rect x="6" y="20" width="1" height="1"/><rect x="10" y="21" width="1" height="1"/><rect x="14" y="20" width="1" height="1"/><rect x="18" y="21" width="1" height="1"/></g></svg><svg class="a" style="left:418px;top:136px" width="24" height="24" viewBox="0 0 24 24"><rect x="0" y="1" width="23" height="1.3" fill="#333"/><rect x="0" y="5" width="23" height="1.3" fill="#555"/><path d="M9 8H16L13.5 12.5H17L10.5 22.5L12 15.5H7.5Z" fill="#f8b800" stroke="#2a2a2a" stroke-width="1"/><path d="M14 9L12 13" stroke="#e03030" stroke-width=".8"/></svg><svg class="a" style="left:456px;top:137px" width="25" height="23" viewBox="0 0 25 23"><rect x="0.5" y="0.5" width="24" height="12" fill="#fff"/><text x="0.6" y="11" font-family="Liberation Sans" font-size="13" fill="#000" textLength="23.4" lengthAdjust="spacingAndGlyphs">TAZ</text><rect x="0.5" y="13" width="24" height="1.2" fill="#222"/><rect x="0.5" y="14" width="24" height="8.5" fill="#30e030"/><g fill="#c0f0c0"><rect x="2" y="17.5" width="1.5" height="1.5"/><rect x="8" y="17.5" width="1.5" height="1.5"/><rect x="14" y="17.5" width="1.5" height="1.5"/><rect x="20" y="17.5" width="1.5" height="1.5"/></g></svg><svg class="a" style="left:495px;top:136px" width="24" height="24" viewBox="0 0 24 24"><path d="M12 1L22 22L12 19Z" fill="#000080"/><path d="M12 1L22 22L17 20Z" fill="#1a2aa0"/><path d="M12 1L1.5 13L17 23Z" fill="#e80000"/><g fill="#ff8040" opacity=".6"><rect x="10" y="8" width="1" height="1"/><rect x="8" y="12" width="1" height="1"/><rect x="12" y="14" width="1" height="1"/><rect x="14" y="18" width="1" height="1"/></g></svg><svg class="a" style="left:534px;top:136px" width="25" height="24" viewBox="0 0 25 24"><path d="M1 1H23.5V16L16.5 23.5H1Z" fill="#7a4a3a"/><rect x="5" y="5" width="15" height="9" fill="#78b8e8"/><rect x="5" y="12" width="11" height="8" fill="#c8e040"/><path d="M12 14L16 10L20 13V16L16 20H5V15Z" fill="#a0d848"/><circle cx="13" cy="7.5" r="1.3" fill="#f0b090"/><path d="M16.5 23.5L23.5 16H18.5L16.5 18Z" fill="#fff" stroke="#333" stroke-width=".6"/><g fill="#c06050" opacity=".8"><rect x="2" y="3" width="1" height="1"/><rect x="2" y="9" width="1" height="1"/><rect x="2" y="15" width="1" height="1"/><rect x="8" y="2" width="1" height="1"/><rect x="16" y="2" width="1" height="1"/><rect x="8" y="21" width="1" height="1"/></g></svg><svg class="a" style="left:600px;top:137px" width="24" height="24" viewBox="0 0 24 24"><g fill="none" stroke="#2a2a2a" stroke-width="1.3"><rect x="0.7" y="0.7" width="22" height="21.8" rx="1"/><path d="M8 0.7V22.5M15.3 0.7V22.5M0.7 7.7H22.7M0.7 14.9H22.7"/></g><g fill="#fff"><rect x="1.4" y="1.4" width="5.9" height="5.6"/><rect x="8.7" y="1.4" width="5.9" height="5.6"/><rect x="16" y="1.4" width="6" height="5.6"/><rect x="1.4" y="8.4" width="5.9" height="5.8"/><rect x="8.7" y="8.4" width="5.9" height="5.8"/><rect x="16" y="8.4" width="6" height="5.8"/><rect x="1.4" y="15.6" width="5.9" height="6.2"/><rect x="8.7" y="15.6" width="5.9" height="6.2"/><rect x="16" y="15.6" width="6" height="6.2"/></g></svg><svg class="a" style="left:639px;top:137px" width="23" height="23" viewBox="0 0 23 23" shape-rendering="crispEdges"><rect x="8" y="0" width="7" height="23" fill="#d80000"/><rect x="0" y="8" width="23" height="7" fill="#d80000"/><rect x="8" y="0" width="7" height="2" fill="#000"/><rect x="8" y="21" width="7" height="2" fill="#000"/><rect x="0" y="8" width="2" height="7" fill="#000"/><rect x="21" y="8" width="2" height="7" fill="#000"/></svg><svg class="a" style="left:677px;top:137px" width="26" height="24" viewBox="0 0 26 24"><path d="M4 3H22" stroke="#e00000" stroke-width="1.2"/><path d="M1.5 3L5.5 0.5V5.5Z M24.5 3L20.5 0.5V5.5Z" fill="#c00000"/><path d="M6 13L8 8H18L20 13" fill="none" stroke="#000" stroke-width="1.6"/><rect x="3" y="12.5" width="20" height="7.5" rx="1.5" fill="#000"/><rect x="4.5" y="14" width="3" height="3" fill="#fff"/><rect x="18.5" y="14" width="3" height="3" fill="#fff"/><rect x="4.5" y="19" width="3" height="3.5" fill="#000"/><rect x="18.5" y="19" width="3" height="3.5" fill="#000"/></svg><svg class="a" style="left:713px;top:134px" width="30" height="29" viewBox="0 0 30 29"><path d="M5.8 10V7L7.5 4.5H16.5L18 7V10" fill="#fff" stroke="#111" stroke-width="1.4"/><rect x="4.3" y="10" width="14.5" height="5" rx="1.2" fill="#000"/><circle cx="7" cy="12.7" r="1.7" fill="#fff"/><rect x="5.8" y="15" width="2.4" height="3" fill="#000"/><path d="M13.5 17V14.5L15 12H23.5L25 14.5V17" fill="#fff" stroke="#e00000" stroke-width="1.4"/><rect x="11.5" y="17" width="15.5" height="5.3" rx="1.2" fill="#e00000"/><circle cx="14" cy="19.8" r="1.6" fill="#fff"/><circle cx="24.3" cy="19.8" r="1.6" fill="#fff"/><rect x="16.8" y="18" width="4.6" height="3.2" fill="#b00000"/><rect x="13" y="22.3" width="2.2" height="2.8" fill="#000"/><rect x="23" y="22.3" width="2.2" height="2.8" fill="#000"/></svg><svg class="a" style="left:756px;top:137px" width="23" height="23" viewBox="0 0 23 23" shape-rendering="crispEdges"><rect x="0.5" y="0.5" width="22" height="22" fill="none" stroke="#222" stroke-width="1.5" stroke-dasharray="3 2"/><rect x="4" y="7" width="16" height="8" fill="#000"/></svg><svg class="a" style="left:796px;top:138px" width="23" height="21" viewBox="0 0 23 21"><path d="M1 3.5H18" stroke="#d00000" stroke-width="1.3"/><path d="M16 0L21 3.5L16 7Z" fill="#d00000"/><path d="M1 9.5H11V18" fill="none" stroke="#d00000" stroke-width="1.3"/><path d="M7.5 16L11 20.5L14.5 16Z" fill="#d00000"/></svg><svg class="a" style="left:834px;top:139px" width="23" height="19" viewBox="0 0 23 19"><rect x="1" y="1" width="20.5" height="16.5" rx="2" fill="#fff" stroke="#555" stroke-width="1.8"/><g fill="#e00000"><rect x="3.5" y="4" width="2" height="2"/><rect x="3.5" y="8" width="2" height="2"/><rect x="3.5" y="12" width="2" height="2"/></g><g fill="#000"><rect x="7.5" y="4" width="10.5" height="2.2" rx="1"/><rect x="7.5" y="8" width="10.5" height="2.2" rx="1"/><rect x="7.5" y="12" width="10.5" height="2.2" rx="1"/></g></svg><svg class="a" style="left:872px;top:136px" width="25" height="23" viewBox="0 0 25 23"><text x="0.8" y="10.5" font-family="Liberation Sans" font-size="12.5" fill="#111" textLength="23" lengthAdjust="spacingAndGlyphs">TAZ</text><rect x="0.5" y="16.5" width="24" height="2.5" fill="#e00000"/><path d="M12.5 13L16.5 17.7L12.5 22.5L8.5 17.7Z" fill="#000"/></svg><svg class="a" style="left:906px;top:52px" width="24" height="24" viewBox="0 0 24 24" shape-rendering="crispEdges"><rect x="9" y="1" width="6" height="5" fill="#000"/><rect x="9" y="21" width="6" height="3" fill="#000"/><rect x="1" y="10" width="5" height="5" fill="#000"/><rect x="19" y="10" width="4" height="5" fill="#000"/></svg><svg class="a" style="left:906px;top:52px" width="24" height="24" viewBox="0 0 24 24"><circle cx="12" cy="12.5" r="7.2" fill="#e00000"/></svg><svg class="a" style="left:1050px;top:48px" width="32" height="30" viewBox="0 0 32 30">
<rect x="16" y="5" width="12.8" height="10" rx="1" fill="#1a1a1a"/><rect x="17.3" y="6.3" width="10" height="4.5" rx="1.5" fill="#10ffff"/><rect x="16" y="5" width="2" height="2" fill="#e00000"/><rect x="26.8" y="5" width="2" height="2" fill="#e00000"/><rect x="23" y="11.5" width="2" height="3" fill="#c00000"/><rect x="25.3" y="11.5" width="3" height="3" fill="#f8c000"/>
<rect x="7" y="11" width="14" height="12" rx="1" fill="#0e800e"/><rect x="9.5" y="12.3" width="9.5" height="4.5" rx="2" fill="#10ffff"/><rect x="8.2" y="17.8" width="3" height="3" fill="#e8e040"/><rect x="12" y="17.5" width="2.5" height="4" fill="#208a20"/>
<rect x="14.5" y="15" width="15" height="10.5" rx="1" fill="#14306e"/><rect x="16.8" y="16.3" width="10.5" height="4.5" rx="2" fill="#10ffff"/><rect x="15.6" y="21.8" width="3.4" height="3" fill="#f8c800"/><rect x="25.6" y="21.8" width="3.4" height="3" fill="#e8e050"/><rect x="20" y="21" width="4.5" height="4" fill="#2a3aa0"/><rect x="14.8" y="25.3" width="3.5" height="2.4" fill="#000"/><rect x="25.8" y="25.3" width="3.5" height="2.4" fill="#000"/></svg><svg class="a" style="left:1223px;top:52px" width="25" height="24" viewBox="0 0 25 24" shape-rendering="crispEdges"><rect x="0" y="1" width="1.5" height="23" fill="#555"/><rect x="0" y="22.5" width="24" height="1.5" fill="#333"/><rect x="1.5" y="7" width="6" height="16" fill="#ff0000"/><rect x="7.5" y="4" width="6" height="19" fill="#1010ff"/><rect x="13.5" y="10" width="5" height="13" fill="#108a10"/><rect x="18.5" y="13" width="5.5" height="10" fill="#e8d850"/></svg><svg class="a" style="left:1339px;top:56px" width="20" height="17" viewBox="0 0 20 17" shape-rendering="crispEdges"><rect width="20" height="17" fill="#777"/><rect x="1.5" y="4.5" width="7" height="11" fill="#c4c4c4"/><rect x="8.5" y="4.5" width="10" height="11" fill="#fff"/><g fill="#b8b8b8"><rect x="2" y="1.5" width="3" height="2"/><rect x="6" y="1.5" width="3" height="2"/><rect x="10" y="1.5" width="3" height="2"/></g></svg><svg class="a" style="left:13px;top:10px" width="23" height="22" viewBox="0 0 23 22"><rect width="23" height="22" fill="#111"/><rect x="1" y="1" width="21" height="20" fill="#2e2e2e"/><path d="M6 9L13 4.5L21 9.5L17 13L9 16.5M4 17.5L12 13L18 14.5L11 18.5L6 20" fill="none" stroke="#f0c020" stroke-width="2.6" stroke-linejoin="round"/><path d="M8 12L15 8.5" stroke="#f8d030" stroke-width="2.2"/><g fill="#c04040" opacity=".7"><rect x="11" y="10" width="1" height="1"/><rect x="14" y="15" width="1" height="1"/><rect x="8" y="19" width="1" height="1"/></g></svg><svg class="a" style="left:1245px;top:1042px" width="26" height="23" viewBox="0 0 26 23"><path d="M12.5 1L24.5 21.5H0.5Z" fill="#c8a844" stroke="#e8b820" stroke-width="1"/><rect x="11" y="7" width="3" height="8.5" fill="#fbfbd2"/><rect x="11" y="17" width="3" height="2.5" fill="#fbfbd2"/><g fill="#ffb000"><rect x="6" y="16" width="1" height="1"/><rect x="16" y="16" width="1" height="1"/><rect x="9" y="12" width="1" height="1"/><rect x="18" y="19" width="1" height="1"/></g></svg><svg class="a" style="left:304px;top:345px" width="20" height="30" viewBox="0 0 20 30"><path d="M1.5 1.5V25L7 20L11 28.5L14.5 27L10.5 19H17.5Z" fill="#fff" stroke="#333" stroke-width="1.3" stroke-linejoin="round"/></svg><div class="a" style="left:0;top:0;width:1371px;height:1075px;border-radius:9px 9px 8px 8px;box-shadow:0 0 0 12px #1e1e1e, inset 1px 0 0 #333, inset 2px 0 0 #9a9a9a, inset -1px 0 0 #9c9c9c, inset 0 -1px 0 #444, inset 0 -2px 0 #8a8a8a, inset 0 1px 0 #7a7a7a;pointer-events:none"></div>
</body></html>
